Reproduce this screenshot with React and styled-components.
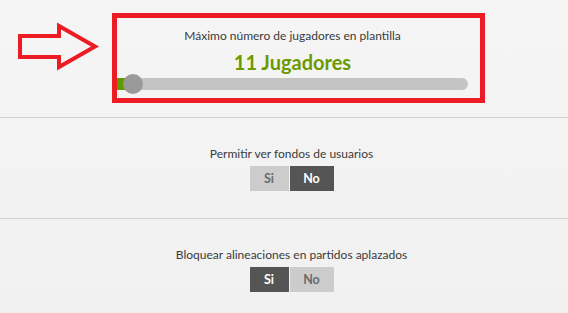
import React from "react";
import styled, { createGlobalStyle } from "styled-components";

const Global = createGlobalStyle`
  html, body { margin: 0; padding: 0; }
  body {
    min-height: 100vh;
    background: linear-gradient(#f5f5f5, #f1f1f1);
    font-family: Lato, "Open Sans", sans-serif;
    color: #3a3a3a;
  }
`;

const Page = styled.div`
  width: 568px;
  height: 313px;
  overflow: hidden;
`;

const Section = styled.section`
  position: relative;
  display: flex;
  flex-direction: column;
  align-items: center;
  padding: ${(p) => p.$pad || "28px 0 27px 15px"};
  border-top: ${(p) => (p.$first ? "none" : "1px solid #d0d0d0")};
`;

const Highlight = styled.div`
  align-self: flex-start;
  box-sizing: border-box;
  width: 373px;
  margin-left: 112px;
  border: 5px solid #ed1c24;
  padding: 10px 12px 8px 0;
  display: flex;
  flex-direction: column;
  align-items: center;
`;

const Label = styled.div`
  font-size: 12px;
  line-height: 16px;
  color: #3a3a3a;
  white-space: nowrap;
`;

const Value = styled.div`
  margin-top: 7px;
  font-size: 20px;
  line-height: 22px;
  font-weight: 700;
  color: #6b9a00;
`;

const Track = styled.div`
  position: relative;
  margin-top: 5px;
  align-self: stretch;
  height: 12px;
  border-radius: 0 6px 6px 0;
  background: #c4c4c4;
`;

const Fill = styled.div`
  height: 100%;
  background: #5e9a00;
`;

const Knob = styled.div`
  position: absolute;
  top: 50%;
  width: 20px;
  height: 20px;
  margin: -10px 0 0 -10px;
  border-radius: 50%;
  background: #9a9a9a;
`;

const Toggle = styled.div`
  display: flex;
  gap: 1px;
  margin-top: 4px;
`;

const Option = styled.button`
  border: none;
  height: 25px;
  padding: 0;
  width: ${(p) => p.$w}px;
  font-family: inherit;
  font-size: 12.5px;
  font-weight: 700;
  cursor: pointer;
  background: ${(p) => (p.$on ? "#555555" : "#cccccc")};
  color: ${(p) => (p.$on ? "#ffffff" : "#6a6a6a")};
`;

const Arrow = styled.svg`
  position: absolute;
  left: 0;
  top: 0;
`;

function YesNo({ value }) {
  return (
    <Toggle>
      <Option $w={39} $on={value}>Si</Option>
      <Option $w={44} $on={!value}>No</Option>
    </Toggle>
  );
}

export default function App() {
  const min = 11;
  const max = 40;
  const val = 11;
  const pct = ((val - min) / (max - min)) * 100;
  return (
    <Page>
      <Global />
      <Section $first $pad="13px 0 14px 0">
        <Arrow width="110" height="80" viewBox="0 0 110 80">
          <polygon
            points="20,36 59,36 59,26 95,46.5 59,67 59,57 20,57"
            fill="none"
            stroke="#ed1c24"
            strokeWidth="4"
          />
        </Arrow>
        <Highlight>
          <Label>Máximo número de jugadores en plantilla</Label>
          <Value>{val} Jugadores</Value>
          <Track>
            <Fill style={{ width: `calc(${pct}% + 14px)` }} />
            <Knob style={{ left: `calc(${pct}% + 16px)` }} />
          </Track>
        </Highlight>
      </Section>
      <Section>
        <Label>Permitir ver fondos de usuarios</Label>
        <YesNo value={false} />
      </Section>
      <Section>
        <Label>Bloquear alineaciones en partidos aplazados</Label>
        <YesNo value={true} />
      </Section>
    </Page>
  );
}
